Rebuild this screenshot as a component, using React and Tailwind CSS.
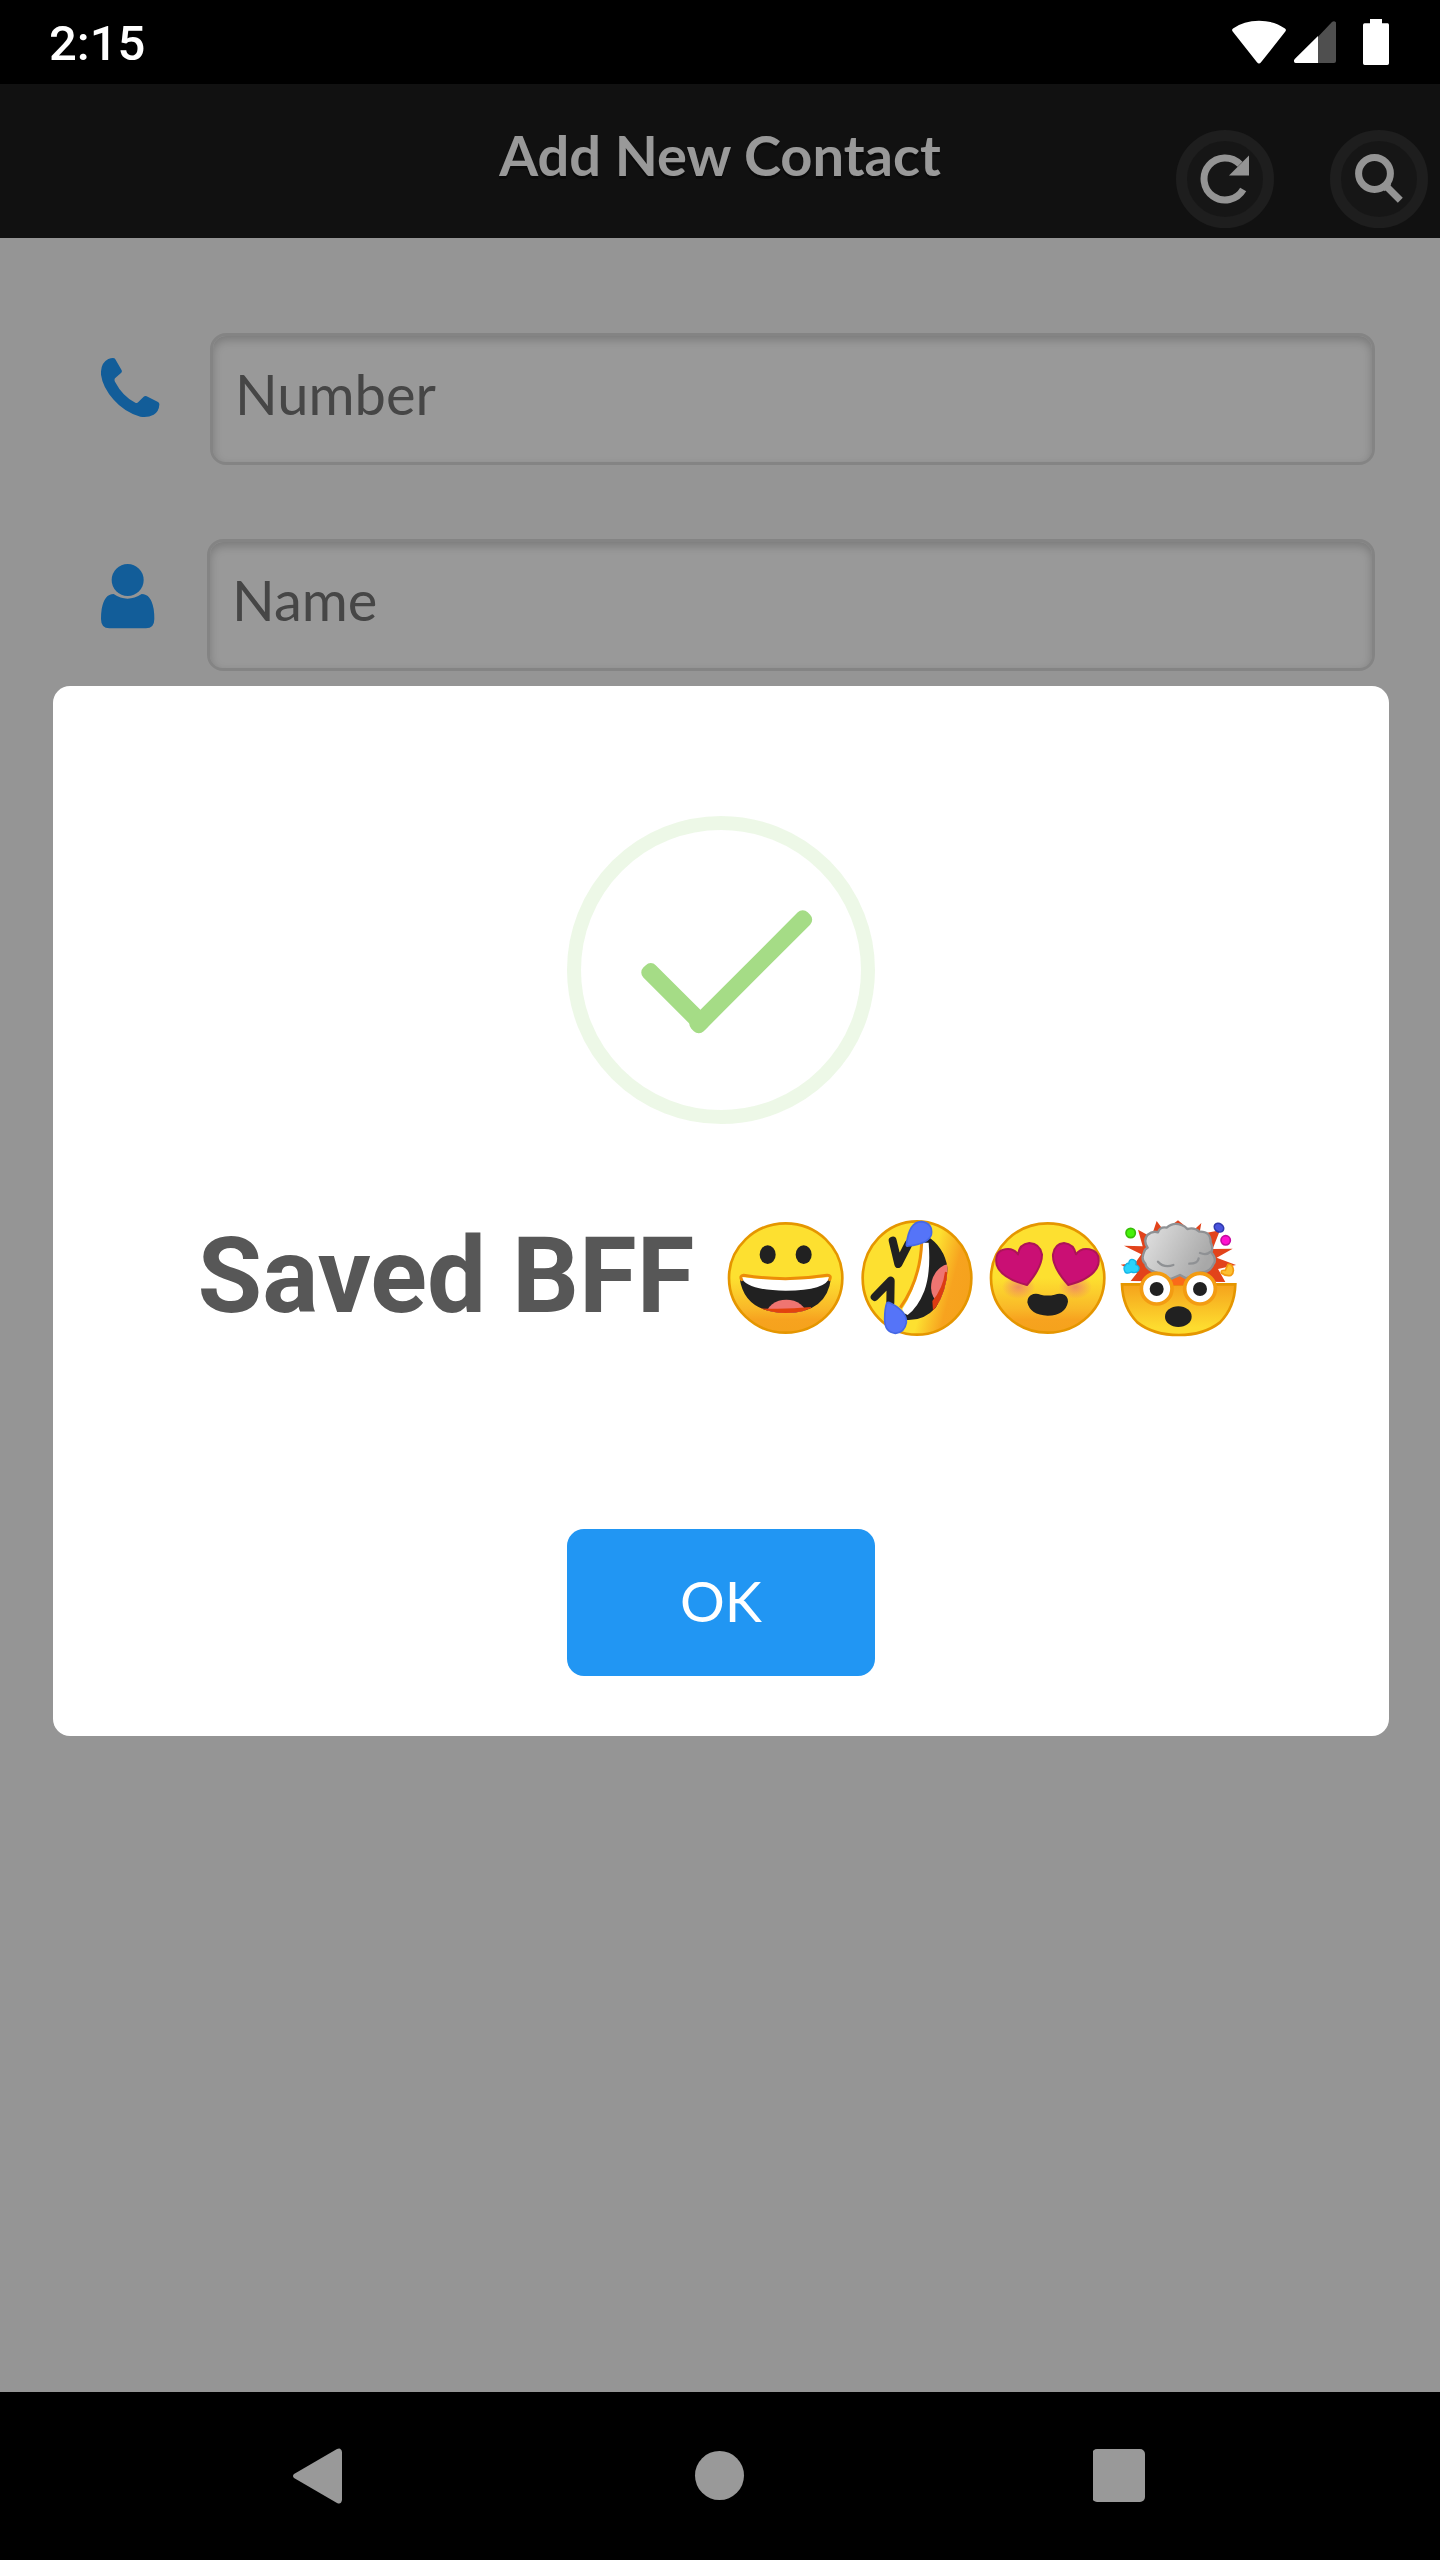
function WifiIcon() {
  return (
    <svg className="h-[44px] w-[54px]" viewBox="0 0 160 130" fill="#fff" aria-hidden="true">
      <path d="M2 34 Q-2 29 3 25 Q35 2 80 2 Q125 2 157 25 Q162 29 158 34 L86 125 Q80 132 74 125 Z" />
    </svg>
  );
}

function SignalIcon() {
  return (
    <svg className="h-[42px] w-[42px]" viewBox="0 0 126 126" aria-hidden="true">
      <path d="M72 47 L114 3 Q120 -2 125 3 Q126 4 126 8 V120 Q126 126 120 126 H72 Z" fill="#4f4f4f" />
      <path d="M72 45 V126 H6 Q-1 126 0 118 Q0 116 3 113 Z" fill="#fff" />
    </svg>
  );
}

function BatteryIcon() {
  return (
    <svg className="h-[46px] w-[26px]" viewBox="0 0 78 138" fill="#fff" aria-hidden="true">
      <path d="M21 0 H57 V13 H74 Q78 13 78 18 V133 Q78 138 73 138 H5 Q0 138 0 133 V18 Q0 13 5 13 H21 Z" />
    </svg>
  );
}

function RefreshIcon() {
  return (
    <svg className="h-[50px] w-[50px] shrink-0" viewBox="0 0 50 50" aria-hidden="true">
      <path d="M40 10.2 A21 21 0 1 0 43.2 35.5" fill="none" stroke="#f7f7f7" strokeWidth="7" />
      <path d="M49 1.5 V21.5 H29 Z" fill="#f7f7f7" />
    </svg>
  );
}

function SearchIcon() {
  return (
    <svg className="h-[50px] w-[50px] shrink-0" viewBox="0 0 50 50" fill="none" stroke="#f7f7f7" aria-hidden="true">
      <circle cx="20.5" cy="19.5" r="15.9" strokeWidth="7" />
      <path d="M31 31 L46.3 46.2" strokeWidth="7" />
      <path d="M30 30 L34 34" strokeWidth="9" />
    </svg>
  );
}

function PhoneIcon() {
  return (
    <svg className="h-[60px] w-[59px] shrink-0" viewBox="0 0 177 180" fill="#1e9bff" aria-hidden="true">
      <path d="M22 3 Q40 -3 43 4 L62 37 Q64 42 60 45 L42 61 Q39 66 42 71 Q65 115 103 134 Q108 137 112 132 L128 116 Q132 113 137 115 L171 132 Q176 135 175 140 Q174 160 158 170 Q140 180 118 176 Q70 162 38 125 Q5 88 0 50 Q-2 15 22 3 Z" />
    </svg>
  );
}

function UserIcon() {
  return (
    <svg className="h-[65px] w-[56px] shrink-0" viewBox="0 0 168 195" fill="#1e9bff" aria-hidden="true">
      <circle cx="80" cy="48" r="48" />
      <path d="M38 90 Q79 118 122 90 Q150 90 158 135 Q160 148 160 165 Q160 193 135 193 H25 Q0 193 0 165 Q0 148 2 135 Q10 90 38 90 Z" />
    </svg>
  );
}

function SuccessIcon() {
  return (
    <svg className="h-[308px] w-[308px]" viewBox="0 0 88 88" aria-hidden="true">
      <circle cx="44" cy="44" r="42" fill="none" stroke="#a5dc86" strokeOpacity="0.2" strokeWidth="4" />
      <rect x="18.5" y="49.3" width="25" height="5" rx="2" fill="#a5dc86" transform="rotate(45 31 51.8)" />
      <rect x="29" y="42" width="47" height="5" rx="2" fill="#a5dc86" transform="rotate(-45 52.5 44.5)" />
    </svg>
  );
}

function FaceGradient({ id }) {
  return (
    <linearGradient id={id} x1="0" y1="0" x2="0" y2="1">
      <stop offset="0.5" stopColor="#fde030" />
      <stop offset="0.78" stopColor="#f9b828" />
      <stop offset="0.88" stopColor="#f7a31f" />
      <stop offset="1" stopColor="#f5a21c" />
    </linearGradient>
  );
}

function GrinEmoji() {
  return (
    <svg className="h-[131px] w-[131px]" viewBox="31 30 393 393" role="img" aria-label="😀">
      <defs>
        <FaceGradient id="grin-face" />
        <clipPath id="grin-mouth">
          <path d="M90 232 Q228 244 364 232 Q352 336 228 336 Q104 334 90 232 Z" />
        </clipPath>
      </defs>
      <ellipse cx="228" cy="231" rx="170" ry="164" fill="url(#grin-face)" stroke="#e59600" strokeWidth="8" />
      <ellipse cx="174" cy="161" rx="24" ry="28" fill="#212121" />
      <ellipse cx="282" cy="161" rx="24" ry="28" fill="#212121" />
      <g clipPath="url(#grin-mouth)">
        <rect x="80" y="220" width="300" height="120" fill="#212121" />
        <ellipse cx="230" cy="342" rx="60" ry="46" fill="#ef7571" />
        <path d="M152 322 Q228 326 304 318 L300 345 H150 Z" fill="#e2420d" />
      </g>
      <path d="M95 228 Q228 244 360 228 Q350 269 228 269 Q108 268 95 228 Z" fill="#fff" />
      <path d="M96 236 Q89 224 102 223 Q228 243 352 223 Q366 222 360 236" fill="none" stroke="#ec8d08" strokeWidth="9" strokeLinecap="round" />
    </svg>
  );
}

function RollingEmoji() {
  return (
    <svg className="h-[131px] w-[131px]" viewBox="424 30 393 393" role="img" aria-label="🤣">
      <defs>
        <linearGradient id="rofl-face" x1="0" y1="0.35" x2="1" y2="0.62">
          <stop offset="0.6" stopColor="#fde030" />
          <stop offset="0.82" stopColor="#f7a31f" />
          <stop offset="1" stopColor="#f5a21c" />
        </linearGradient>
        <clipPath id="rofl-mouth">
          <path d="M650 104 Q704 136 714 202 Q711 270 678 320 Q642 360 590 357 Q580 348 587 334 Q650 230 644 112 Z" />
        </clipPath>
      </defs>
      <ellipse cx="622" cy="231" rx="163" ry="170" fill="url(#rofl-face)" stroke="#e59600" strokeWidth="8" />
      <g clipPath="url(#rofl-mouth)">
        <rect x="570" y="90" width="160" height="280" fill="#212121" />
        <ellipse cx="718" cy="252" rx="53" ry="64" fill="#ef7571" transform="rotate(15 718 252)" />
        <path d="M716 215 L720 270 L670 330 L668 300 Q700 262 706 212 Z" fill="#dc3b12" />
      </g>
      <path d="M640 125 H657 Q664 215 644 270 Q624 320 594 342 Q580 336 578 324 Q628 250 634 140 Z" fill="#fff" />
      <path d="M636 124 Q632 236 572 320" fill="none" stroke="#ec8d08" strokeWidth="9" />
      <path d="M549 119 L566 189 L597 128" fill="none" stroke="#212121" strokeWidth="24" strokeLinecap="round" strokeLinejoin="round" />
      <path d="M495 288 L543 239 L542 305" fill="none" stroke="#212121" strokeWidth="24" strokeLinecap="round" strokeLinejoin="round" />
      <path d="M590 132 Q598 62 635 62 Q671 67 665 101 Q656 128 596 135 Q590 136 590 132 Z" fill="#5574f8" stroke="#4568e5" strokeWidth="5" />
      <path d="M531 307 Q535 302 542 306 Q593 332 590 365 Q585 395 557 397 Q525 394 525 355 Q525 324 531 307 Z" fill="#5574f8" stroke="#4568e5" strokeWidth="5" />
    </svg>
  );
}

function HeartEyesEmoji() {
  return (
    <svg className="h-[131px] w-[131px]" viewBox="38 30 393 393" role="img" aria-label="😍">
      <defs>
        <FaceGradient id="love-face" />
        <radialGradient id="love-blush">
          <stop offset="0" stopColor="#ed7770" stopOpacity="0.75" />
          <stop offset="1" stopColor="#ed7770" stopOpacity="0" />
        </radialGradient>
      </defs>
      <ellipse cx="235" cy="231" rx="170" ry="164" fill="url(#love-face)" stroke="#e59600" strokeWidth="8" />
      <ellipse cx="148" cy="258" rx="50" ry="36" fill="url(#love-blush)" />
      <ellipse cx="318" cy="258" rx="50" ry="36" fill="url(#love-blush)" />
      <path d="M173 252 Q96 232 82 192 Q74 150 108 145 Q132 141 146 160 Q150 129 180 126 Q212 128 218 160 Q219 198 173 252 Z" fill="#ca0f74" stroke="#ad1457" strokeWidth="6" strokeLinejoin="round" />
      <path d="M297 252 Q248 198 251 160 Q256 128 284 126 Q314 129 320 160 Q334 140 360 145 Q394 152 387 190 Q374 232 297 252 Z" fill="#ca0f74" stroke="#ad1457" strokeWidth="6" strokeLinejoin="round" />
      <path d="M192 279 Q202 276 214 281 Q234 286 256 281 Q268 276 279 279 Q296 284 296 302 Q289 342 235 344 Q182 342 174 304 Q174 284 192 279 Z" fill="#212121" />
    </svg>
  );
}

function MindBlownEmoji() {
  return (
    <svg className="h-[131px] w-[131px]" viewBox="431 30 393 393" role="img" aria-label="🤯">
      <defs>
        <linearGradient id="blown-face" x1="0" y1="0" x2="0" y2="1">
          <stop offset="0" stopColor="#f5a21c" />
          <stop offset="0.85" stopColor="#fddc2f" />
        </linearGradient>
        <linearGradient id="blown-smoke" x1="0" y1="0" x2="1" y2="0.4">
          <stop offset="0.1" stopColor="#dedede" />
          <stop offset="1" stopColor="#a8a8a8" />
        </linearGradient>
      </defs>
      <path d="M484 240 L503 216 L454 191 L498 185 L516 160 L464 134 L520 136 L506 86 L546 108 L562 60 L584 90 L626 58 L668 92 L696 66 L690 100 L752 88 L730 144 L790 143 L742 170 L800 192 L746 204 L768 243 Z" fill="#e2431b" />
      <path d="M530 226 L628 190 L722 226 L700 252 H560 Z" fill="#fa6a1a" />
      <path d="M560 214 Q530 206 528 188 Q514 176 524 154 Q526 144 535 140 Q521 120 534 102 Q550 88 566 94 Q572 76 592 80 Q612 62 636 72 Q648 76 654 84 Q676 78 690 92 Q724 90 724 124 Q732 142 726 154 Q744 176 732 190 Q722 214 696 214 L650 232 L632 222 L604 234 Z" fill="url(#blown-smoke)" stroke="#8f9194" strokeWidth="7" strokeLinejoin="round" />
      <path d="M566 182 Q584 202 612 192 M724 152 Q712 164 692 156 M660 188 Q686 188 688 172" fill="none" stroke="#8f9194" strokeWidth="7" strokeLinecap="round" />
      <path d="M458 250 H798 Q796 320 752 364 Q704 402 628 402 Q552 402 504 364 Q460 320 458 250 Z" fill="url(#blown-face)" stroke="#e59600" strokeWidth="8" />
      <path d="M590 246 H664" stroke="#fa6a1a" strokeWidth="14" />
      <circle cx="562" cy="263" r="46" fill="#fff" stroke="#f39c12" strokeWidth="11" />
      <circle cx="692" cy="263" r="46" fill="#fff" stroke="#f39c12" strokeWidth="11" />
      <circle cx="562" cy="264" r="21" fill="#212121" />
      <circle cx="692" cy="264" r="21" fill="#212121" />
      <ellipse cx="627" cy="347" rx="40" ry="31" fill="#212121" />
      <circle cx="484" cy="96" r="14" fill="#46f20a" stroke="#37bd08" strokeWidth="5" />
      <circle cx="769" cy="118" r="14" fill="#ff10cf" stroke="#c40ba0" strokeWidth="5" />
      <ellipse cx="749" cy="80" rx="15" ry="12" fill="#4a54dd" stroke="#3039ae" strokeWidth="5" transform="rotate(35 749 80)" />
      <path d="M468 194 Q472 184 478 188 Q480 172 492 176 Q503 180 499 191 Q514 196 507 209 Q500 218 486 213 Q468 222 465 207 Q462 198 468 194 Z" fill="#29d3fb" stroke="#14b4e6" strokeWidth="4" />
      <path d="M776 190 Q786 188 790 198 Q796 214 785 223 Q768 226 756 216 Q754 206 768 208 Z" fill="#fdc02f" stroke="#f39c12" strokeWidth="5" />
    </svg>
  );
}

function StatusBar() {
  return (
    <div className="flex h-[84px] items-center justify-between bg-black pr-[51px] pl-[49px]">
      <span className="pt-[4px] font-['Roboto',sans-serif] text-[49px] leading-[56px] font-medium text-white">2:15</span>
      <div className="flex items-center">
        <WifiIcon />
        <span className="ml-[8px]">
          <SignalIcon />
        </span>
        <span className="ml-[27px]">
          <BatteryIcon />
        </span>
      </div>
    </div>
  );
}

function RoundButton({ label, children }) {
  return (
    <button
      type="button"
      aria-label={label}
      className="flex h-[98px] w-[98px] items-center justify-center rounded-full border-[11px] border-[#323232] bg-[#262626]"
    >
      {children}
    </button>
  );
}

function Header() {
  return (
    <header className="grid h-[154px] grid-cols-[1fr_auto_1fr] items-start bg-[#1d1d1d] px-[12px]">
      <span />
      <h1 className="pt-[35px] text-[56px] leading-[72px] font-bold text-white [text-shadow:0_3px_0_#111]">
        Add New Contact
      </h1>
      <div className="flex justify-end gap-[56px] pt-[46px]">
        <RoundButton label="Refresh">
          <RefreshIcon />
        </RoundButton>
        <RoundButton label="Search">
          <SearchIcon />
        </RoundButton>
      </div>
    </header>
  );
}

function Field({ id, label, type, icon: Icon }) {
  return (
    <div className="flex items-start gap-[50px]">
      <label htmlFor={id} aria-label={label} className="pt-[25px]">
        <Icon />
      </label>
      <input
        id={id}
        type={type}
        placeholder={label}
        className="h-[132px] min-w-0 flex-1 rounded-[16px] border-[3px] border-[#dddddd] bg-white px-[22px] pb-[12px] text-[56px] text-[#333] shadow-[inset_0_4px_10px_rgba(0,0,0,0.2)] outline-none placeholder:text-[#757575] placeholder:opacity-100"
      />
    </div>
  );
}

function SavedDialog() {
  return (
    <div className="absolute inset-0 flex items-center justify-center bg-black/40 pr-[51px] pb-[54px] pl-[53px]">
      <div
        role="dialog"
        aria-modal="true"
        aria-labelledby="saved-title"
        className="flex w-full flex-col items-center rounded-[17px] bg-white pt-[130px] pb-[60px]"
      >
        <SuccessIcon />
        <h2
          id="saved-title"
          className="mt-[87px] flex items-center gap-[26px] font-['Roboto',sans-serif] text-[105px] leading-[131px] font-bold text-[#575757]"
        >
          Saved BFF
          <span className="flex">
            <GrinEmoji />
            <RollingEmoji />
            <HeartEyesEmoji />
            <MindBlownEmoji />
          </span>
        </h2>
        <button
          type="button"
          className="mt-[187px] h-[147px] w-[308px] rounded-[17px] bg-[#2196f3] pb-[4px] text-[56px] text-white"
        >
          OK
        </button>
      </div>
    </div>
  );
}

function NavBar() {
  return (
    <nav className="flex h-[168px] items-center justify-center gap-[346px] bg-black">
      <button type="button" aria-label="Back">
        <svg className="h-[56px] w-[54px]" viewBox="0 0 54 56" fill="#999">
          <path d="M1 30 Q-1 28 1 26 L44 1 Q48 -1 49 4 V52 Q48 57 44 55 Z" />
        </svg>
      </button>
      <button type="button" aria-label="Home">
        <svg className="h-[54px] w-[54px]" viewBox="0 0 54 54" fill="#999">
          <circle cx="26.5" cy="26.5" r="24.5" />
        </svg>
      </button>
      <button type="button" aria-label="Recent apps">
        <svg className="h-[54px] w-[54px]" viewBox="1 0 54 54" fill="#999">
          <rect width="53" height="53" rx="5" />
        </svg>
      </button>
    </nav>
  );
}

export default function App() {
  return (
    <div className="flex min-h-screen flex-col bg-black font-['Lato',sans-serif]">
      <StatusBar />
      <div className="relative flex flex-1 flex-col bg-[#f9f9f9]">
        <Header />
        <form className="flex flex-col gap-[74px] pt-[95px] pr-[65px] pl-[101px]">
          <Field id="number" label="Number" type="tel" icon={PhoneIcon} />
          <Field id="name" label="Name" type="text" icon={UserIcon} />
        </form>
        <SavedDialog />
      </div>
      <NavBar />
    </div>
  );
}
